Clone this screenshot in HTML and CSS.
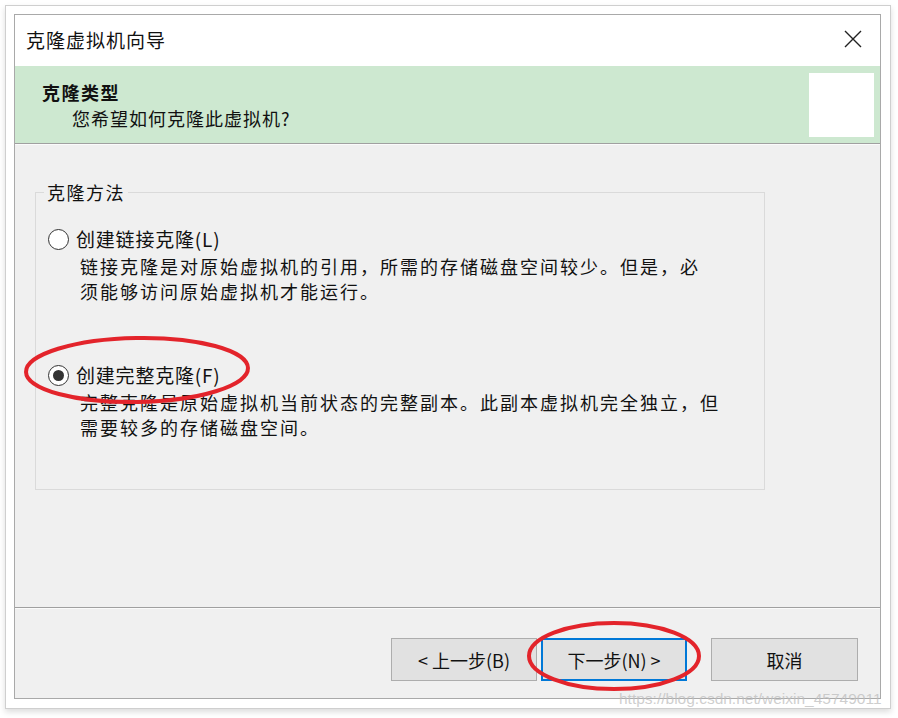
FILE: index.html
```html
<!DOCTYPE html>
<html lang="zh-CN">
<head>
<meta charset="utf-8">
<title>克隆虚拟机向导</title>
<link rel="stylesheet" href="styles.css">
</head>
<body>
<div class="frame">
  <div class="dialog">
    <div class="titlebar">
      <span class="title">克隆虚拟机向导</span>
      <span class="close">
        <svg width="18" height="18" viewBox="0 0 18 18"><path d="M1 1 L17 17 M17 1 L1 17" stroke="#222" stroke-width="1.4" fill="none"/></svg>
      </span>
    </div>
    <div class="header">
      <div class="header-text">
        <div class="h-title">克隆类型</div>
        <div class="h-sub">您希望如何克隆此虚拟机?</div>
      </div>
      <div class="header-box"></div>
    </div>
    <div class="body">
      <fieldset class="group">
        <legend class="legend">克隆方法</legend>
        <div class="option">
          <div class="opt-row"><span class="radio"></span><span class="opt-label">创建链接克隆(L)</span></div>
          <div class="desc">链接克隆是对原始虚拟机的引用，所需的存储磁盘空间较少。但是，必<br>须能够访问原始虚拟机才能运行。</div>
        </div>
        <div class="option option-2">
          <div class="opt-row"><span class="radio checked"></span><span class="opt-label">创建完整克隆(F)</span></div>
          <div class="desc">完整克隆是原始虚拟机当前状态的完整副本。此副本虚拟机完全独立，但<br>需要较多的存储磁盘空间。</div>
        </div>
      </fieldset>
    </div>
    <div class="footer">
      <button class="btn">&lt; 上一步(B)</button>
      <button class="btn btn-default">下一步(N) &gt;</button>
      <button class="btn btn-cancel">取消</button>
    </div>
  </div>
</div>
<div class="watermark">https://blog.csdn.net/weixin_45749011</div>
<svg class="marks" width="898" height="718" viewBox="0 0 898 718">
  <ellipse cx="137" cy="370" rx="111" ry="32" fill="none" stroke="#e3242b" stroke-width="4" transform="rotate(-1 137 370)"/>
  <ellipse cx="614" cy="656" rx="85" ry="33" fill="none" stroke="#e3242b" stroke-width="4"/>
</svg>
</body>
</html>
```
FILE: styles.css
```css
html, body {
  margin: 0;
  padding: 0;
  background: #fff;
}
body {
  width: 898px;
  height: 718px;
  overflow: hidden;
  position: relative;
  font-family: "Noto Sans CJK SC", "Noto Sans", sans-serif;
  color: #111;
}
.frame {
  margin: 5px 0 0 5px;
  width: 886px;
  height: 704px;
  box-sizing: border-box;
  border: 1px solid #cfcfcf;
  box-shadow: 0 3px 6px rgba(0, 0, 0, 0.14);
  padding: 8px 0 0 8px;
  background: #fff;
}
.dialog {
  width: 867px;
  height: 685px;
  box-sizing: border-box;
  border: 1px solid #a9a9a9;
  display: flex;
  flex-direction: column;
  background: #f0f0f0;
}
.titlebar {
  height: 51px;
  flex: none;
  background: #fff;
  display: flex;
  align-items: center;
  justify-content: space-between;
  padding: 0 18px 0 11px;
}
.title {
  font-size: 19px;
  letter-spacing: 1px;
  line-height: 26px;
  margin-top: -2px;
}
.close {
  display: flex;
  width: 18px;
  height: 18px;
  margin-top: -3px;
}
.header {
  height: 77px;
  flex: none;
  background: #cde8d0;
  border-bottom: 1px solid #a0a0a0;
  display: flex;
  justify-content: space-between;
  align-items: flex-start;
}
.header-text {
  padding: 13px 0 0 27px;
}
.h-title {
  font-size: 18px;
  font-weight: bold;
  letter-spacing: 1.5px;
  line-height: 26px;
}
.h-sub {
  font-size: 18px;
  letter-spacing: 1px;
  line-height: 26px;
  padding-left: 30px;
}
.header-box {
  width: 65px;
  height: 64px;
  background: #fff;
  margin: 7px 6px 0 0;
}
.body {
  height: 427px;
  flex: none;
  border-top: 1px solid #fbfbfb;
  border-bottom: 1px solid #a0a0a0;
  padding: 35px 0 0 20px;
  box-sizing: content-box;
}
.group {
  margin: 0;
  width: 730px;
  height: 310px;
  box-sizing: border-box;
  border: 1px solid #dadada;
  padding: 22px 0 0 12px;
}
.legend {
  font-size: 18px;
  letter-spacing: 1.5px;
  line-height: 24px;
  padding: 0 3px;
  margin-left: -4px;
}
.option {
  display: flex;
  flex-direction: column;
}
.option-2 {
  margin-top: 58px;
}
.opt-row {
  display: flex;
  align-items: center;
  height: 26px;
  gap: 7px;
}
.radio {
  width: 21px;
  height: 21px;
  box-sizing: border-box;
  border: 1px solid #333;
  border-radius: 50%;
  background: #fff;
  display: flex;
  align-items: center;
  justify-content: center;
}
.radio.checked::after {
  content: "";
  width: 11px;
  height: 11px;
  border-radius: 50%;
  background: #333;
}
.opt-label {
  font-size: 19px;
  letter-spacing: 0.8px;
  line-height: 26px;
}
.desc {
  margin-left: 32px;
  margin-top: 2px;
  font-size: 18px;
  letter-spacing: 2px;
  line-height: 25px;
  white-space: nowrap;
}
.footer {
  flex: 1;
  border-top: 1px solid #fbfbfb;
  display: flex;
  justify-content: flex-end;
  align-items: flex-start;
  padding: 29px 22px 0 0;
}
.btn {
  width: 146px;
  height: 43px;
  box-sizing: border-box;
  background: #e1e1e1;
  border: 1px solid #adadad;
  font-family: "Noto Sans CJK SC", "Noto Sans", sans-serif;
  font-size: 18px;
  color: #111;
  padding: 0;
  margin: 0;
}
.btn-default {
  margin-left: 4px;
  border: 2px solid #0078d7;
}
.btn-cancel {
  margin-left: 24px;
  width: 147px;
}
.watermark {
  position: absolute;
  left: 619px;
  top: 688px;
  font-family: "Liberation Sans", Arial, sans-serif;
  font-size: 15.5px;
  line-height: 22px;
  color: rgba(190, 190, 190, 0.75);
  white-space: nowrap;
}
.marks {
  position: absolute;
  left: 0;
  top: 0;
  pointer-events: none;
}
```
